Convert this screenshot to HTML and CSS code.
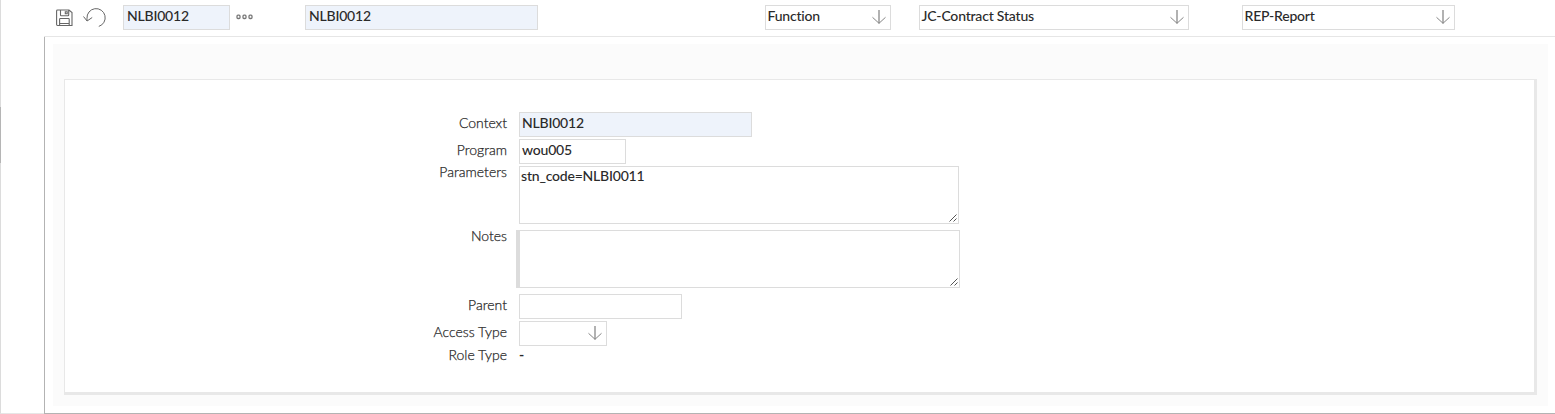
FILE: index.html
```html
<!DOCTYPE html>
<html lang="en">
<head>
<meta charset="utf-8">
<title>NLBI0012</title>
<link rel="stylesheet" href="styles.css">
</head>
<body>
<svg class="defs" width="0" height="0">
  <symbol id="arrow" viewBox="0 0 14 14"><path d="M7 0V13.4" stroke="#aaa" stroke-width="1.8"/><path d="M.5 7.3L7 13.3L13.5 7.3" stroke="#858585" stroke-width="1"/></symbol>
  <symbol id="grip" viewBox="0 0 8 8"><path d="M.5 7.5L7.5 .5M4.5 7.5L7.5 4.5" stroke="#555" stroke-width="1"/></symbol>
</svg>
<div class="app">
  <aside class="rail"><div class="rail-thumb"></div></aside>
  <header class="toolbar">
    <svg class="icon save" viewBox="0 0 17 18" width="17" height="18"><path d="M1.5 1H13L16 3.5V16.5H1.5Q.6 16.5.6 15.6V1.9Q.6 1 1.5 1ZM4.5 1V6Q4.5 6.7 5.2 6.7H12Q12.7 6.7 12.7 6V1M9.3 2.7H11.2V4.7H9.3ZM3.6 16.5V10.2Q3.6 9.5 4.3 9.5H12.5Q13.2 9.5 13.2 10.2V16.5M3.6 14.5H13.2" stroke="#666" stroke-width="1.1"/></svg>
    <svg class="icon undo" viewBox="0 0 23 20" width="23" height="20"><path d="M4 13V10.3A9.1 9.1 0 1 1 15.8 18.4M.5 8.5L4.1 13L9.2 9.5" stroke="#666" stroke-width="1"/></svg>
    <div class="field code shade">NLBI0012</div>
    <svg class="icon dots" viewBox="0 0 17 6" width="17" height="6"><g stroke="#777" stroke-width="1.3"><rect x="1" y="1.2" width="3" height="3.3" rx="1"/><rect x="7" y="1.2" width="3" height="3.3" rx="1"/><rect x="13" y="1.2" width="3" height="3.3" rx="1"/></g></svg>
    <div class="field name shade">NLBI0012</div>
    <div class="field select kind">Function<svg class="arrow"><use href="#arrow"/></svg></div>
    <div class="field select module">JC-Contract Status<svg class="arrow"><use href="#arrow"/></svg></div>
    <div class="field select report">REP-Report<svg class="arrow"><use href="#arrow"/></svg></div>
  </header>
  <main class="frame">
    <div class="backdrop">
      <section class="panel">
        <div class="row"><label class="label">Context</label><div class="field name shade">NLBI0012</div></div>
        <div class="row"><label class="label">Program</label><div class="field code">wou005</div></div>
        <div class="row area-row"><label class="label">Parameters</label><div class="area">stn_code=NLBI0011<svg class="grip"><use href="#grip"/></svg></div></div>
        <div class="row area-row"><label class="label">Notes</label><div class="area marked"><svg class="grip"><use href="#grip"/></svg></div></div>
        <div class="row"><label class="label">Parent</label><div class="field parent"></div></div>
        <div class="row"><label class="label">Access Type</label><div class="field select access"><svg class="arrow"><use href="#arrow"/></svg></div></div>
        <div class="row role-row"><label class="label">Role Type</label><div class="plain">-</div></div>
      </section>
    </div>
  </main>
</div>
</body>
</html>
```

FILE: styles.css
```css
* { box-sizing: border-box; }
body { margin: 0; background: #fff; color: #2a2a2a; font: 14px/20px Lato, "Liberation Sans", sans-serif; overflow: hidden; }
svg { fill: none; display: block; flex: none; }
.defs { position: absolute; }
.app { width: 1555px; height: 414px; display: grid; grid-template: 37px 377px / 44px 1511px; }
.rail { grid-row: 1 / 3; border-left: 1px solid #dcdcdc; border-bottom: 1px solid #e6e6e6; padding-top: 107px; }
.rail-thumb { width: 1px; height: 56px; margin-left: -1px; background: #b5b5b5; }
.toolbar { display: flex; align-items: flex-start; padding-top: 5px; border-bottom: 1px solid #e6e6e6; }
.save { margin: 4px 0 0 12px; }
.undo { margin: 3px 0 0 10px; }
.dots { margin: 9px 0 0 6px; }
.field { height: 25px; border: 1px solid #dcdcdc; padding: 0 2px; font-weight: 500; letter-spacing: -0.2px; white-space: nowrap; flex: none; }
.shade { background: #eef3fb; }
.code { width: 107px; }
.name { width: 233px; }
.toolbar .code { margin-left: 17px; }
.toolbar .name { margin-left: 52px; }
.toolbar .shade { padding-left: 3px; }
.select { display: flex; justify-content: space-between; padding: 0 4px 0 1.5px; }
.arrow { width: 14px; height: 14px; margin: 4px 0 0 auto; }
.kind { width: 126px; margin-left: 227px; }
.module { width: 270px; margin-left: 28px; }
.report { width: 213px; margin-left: 53px; }
.frame { border-left: 1px solid #b3b3b3; border-bottom: 1px solid #b3b3b3; padding: 7px 7px 7px 8px; }
.backdrop { height: 362px; background: #fbfbfb; padding: 35px 11px 11px; }
.panel { height: 316px; background: #fff; border: solid #e8e8e8; border-width: 1px 3px 3px 1px; padding-top: 32px; }
.row { display: flex; height: 25px; margin-bottom: 2px; }
.label { width: 442px; margin-right: 12px; padding-top: 1px; text-align: right; font-weight: 300; -webkit-text-stroke: 0.25px #2a2a2a; }
.area-row { height: 58px; margin-bottom: 6px; }
.area-row .label { padding-top: 0; margin-top: -4px; }
.area { width: 440px; height: 58px; border: 1px solid #dcdcdc; padding-left: 1px; font-weight: 500; letter-spacing: -0.2px; line-height: 18px; display: flex; justify-content: space-between; }
.marked { width: 444px; margin-left: -3px; border-left-width: 4px; }
.grip { width: 8px; height: 8px; align-self: flex-end; margin: 0 1px 1px auto; }
.parent { width: 163px; }
.access { width: 88px; }
.role-row .label { margin-top: -4px; }
.plain { font-weight: 700; margin-top: -3px; }
```
